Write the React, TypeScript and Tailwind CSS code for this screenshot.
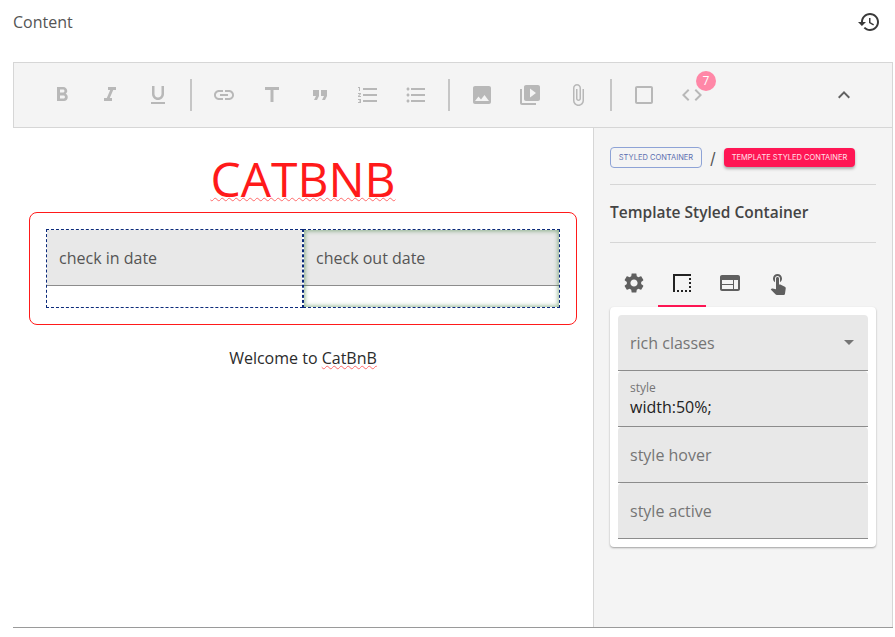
const P = {
  bold: 'M15.6 10.79c.97-.67 1.65-1.77 1.65-2.79 0-2.26-1.75-4-4-4H7v14h7.04c2.09 0 3.71-1.7 3.71-3.79 0-1.52-.86-2.82-2.15-3.42zM10 6.5h3c.83 0 1.5.67 1.5 1.5s-.67 1.5-1.5 1.5h-3v-3zm3.5 9H10v-3h3.5c.83 0 1.5.67 1.5 1.5s-.67 1.5-1.5 1.5z',
  italic: 'M10 4v3h2.21l-3.42 8H6v3h8v-3h-2.21l3.42-8H18V4z',
  underline: 'M12 17c3.31 0 6-2.69 6-6V3h-2.5v8c0 1.93-1.57 3.5-3.5 3.5S8.5 12.93 8.5 11V3H6v8c0 3.31 2.69 6 6 6zm-7 2v2h14v-2H5z',
  link: 'M3.9 12c0-1.71 1.39-3.1 3.1-3.1h4V7H7c-2.76 0-5 2.24-5 5s2.24 5 5 5h4v-1.9H7c-1.71 0-3.1-1.39-3.1-3.1zM8 13h8v-2H8v2zm9-6h-4v1.9h4c1.71 0 3.1 1.39 3.1 3.1s-1.39 3.1-3.1 3.1h-4V17h4c2.76 0 5-2.24 5-5s-2.24-5-5-5z',
  title: 'M5 4v3h5.5v12h3V7H19V4z',
  quote: 'M6 17h3l2-4V7H5v6h3zm8 0h3l2-4V7h-6v6h3z',
  numbered: 'M2 17h2v.5H3v1h1v.5H2v1h3v-4H2v1zm1-9h1V4H2v1h1v3zm-1 3h1.8L2 13.1v.9h3v-1H3.2L5 10.9V10H2v1zm5-6v2h14V5H7zm0 14h14v-2H7v2zm0-6h14v-2H7v2z',
  bulleted: 'M4 10.5c-.83 0-1.5.67-1.5 1.5s.67 1.5 1.5 1.5 1.5-.67 1.5-1.5-.67-1.5-1.5-1.5zm0-6c-.83 0-1.5.67-1.5 1.5S3.17 7.5 4 7.5 5.5 6.83 5.5 6 4.83 4.5 4 4.5zm0 12c-.83 0-1.5.68-1.5 1.5s.68 1.5 1.5 1.5 1.5-.68 1.5-1.5-.67-1.5-1.5-1.5zM7 19h14v-2H7v2zm0-6h14v-2H7v2zm0-8v2h14V5H7z',
  image: 'M21 19V5c0-1.1-.9-2-2-2H5c-1.1 0-2 .9-2 2v14c0 1.1.9 2 2 2h14c1.1 0 2-.9 2-2zM8.5 13.5l2.5 3.01L14.5 12l4.5 6H5l3.5-4.5z',
  video: 'M4 6H2v14c0 1.1.9 2 2 2h14v-2H4V6zm16-4H8c-1.1 0-2 .9-2 2v12c0 1.1.9 2 2 2h12c1.1 0 2-.9 2-2V4c0-1.1-.9-2-2-2zm-8 12.5v-9l6 4.5-6 4.5z',
  attach: 'M16.5 6v11.5c0 2.21-1.79 4-4 4s-4-1.79-4-4V5c0-1.38 1.12-2.5 2.5-2.5s2.5 1.12 2.5 2.5v10.5c0 .55-.45 1-1 1s-1-.45-1-1V6H10v9.5c0 1.38 1.12 2.5 2.5 2.5s2.5-1.12 2.5-2.5V5c0-2.21-1.79-4-4-4S7 2.79 7 5v12.5c0 3.04 2.46 5.5 5.5 5.5s5.5-2.46 5.5-5.5V6h-1.5z',
  square: 'M19 5v14H5V5h14m0-2H5c-1.1 0-2 .9-2 2v14c0 1.1.9 2 2 2h14c1.1 0 2-.9 2-2V5c0-1.1-.9-2-2-2z',
  code: 'M9.4 16.6L4.8 12l4.6-4.6L8 6l-6 6 6 6 1.4-1.4zm5.2 0l4.6-4.6-4.6-4.6L16 6l6 6-6 6-1.4-1.4z',
  expandLess: 'M12 8l-6 6 1.41 1.41L12 10.83l4.59 4.58L18 14z',
  history: 'M13 3c-4.97 0-9 4.03-9 9H1l3.89 3.89.07.14L9 12H6c0-3.87 3.13-7 7-7s7 3.13 7 7-3.13 7-7 7c-1.93 0-3.68-.79-4.94-2.06l-1.42 1.42C8.27 19.99 10.51 21 13 21c4.97 0 9-4.03 9-9s-4.03-9-9-9zm-1 5v5l4.28 2.54.72-1.21-3.5-2.08V8H12z',
  settings: 'M19.14 12.94c.04-.3.06-.61.06-.94 0-.32-.02-.64-.07-.94l2.03-1.58c.18-.14.23-.41.12-.61l-1.92-3.32c-.12-.22-.37-.29-.59-.22l-2.39.96c-.5-.38-1.03-.7-1.62-.94l-.36-2.54c-.04-.24-.24-.41-.48-.41h-3.84c-.24 0-.43.17-.47.41l-.36 2.54c-.59.24-1.13.57-1.62.94l-2.39-.96c-.22-.08-.47 0-.59.22L2.74 8.87c-.12.21-.08.47.12.61l2.03 1.58c-.05.3-.09.63-.09.94s.02.64.07.94l-2.03 1.58c-.18.14-.23.41-.12.61l1.92 3.32c.12.22.37.29.59.22l2.39-.96c.5.38 1.03.7 1.62.94l.36 2.54c.05.24.24.41.48.41h3.84c.24 0 .44-.17.47-.41l.36-2.54c.59-.24 1.13-.56 1.62-.94l2.39.96c.22.08.47 0 .59-.22l1.92-3.32c.12-.22.07-.47-.12-.61l-2.01-1.58zM12 15.6c-1.98 0-3.6-1.62-3.6-3.6s1.62-3.6 3.6-3.6 3.6 1.62 3.6 3.6-1.62 3.6-3.6 3.6z',
  border: 'M15 21h2v-2h-2v2zm4 0h2v-2h-2v2zM7 21h2v-2H7v2zm4 0h2v-2h-2v2zm8-4h2v-2h-2v2zm0-4h2v-2h-2v2zM3 3v18h2V5h16V3H3zm16 6h2V7h-2v2z',
  web: 'M20 4H4c-1.1 0-1.99.9-1.99 2L2 18c0 1.1.9 2 2 2h16c1.1 0 2-.9 2-2V6c0-1.1-.9-2-2-2zm-5 14H4v-4h11v4zm0-5H4V9h11v4zm5 5h-4V9h4v9z',
  touch: 'M9 11.24V7.5C9 6.12 10.12 5 11.5 5S14 6.12 14 7.5v3.74c1.21-.81 2-2.18 2-3.74C16 5.01 13.99 3 11.5 3S7 5.01 7 7.5c0 1.56.79 2.93 2 3.74zm9.84 4.63l-4.54-2.26c-.17-.07-.35-.11-.54-.11H13v-6c0-.83-.67-1.5-1.5-1.5S10 6.67 10 7.5v10.74l-3.43-.72c-.08-.01-.15-.03-.24-.03-.31 0-.59.13-.79.33l-.79.8 4.94 4.94c.27.27.65.44 1.06.44h6.79c.75 0 1.33-.55 1.44-1.28l.75-5.27c.01-.07.02-.14.02-.2 0-.62-.38-1.16-.91-1.38z',
};

function Icon({ d, className = 'fill-[#b8b8b8]' }: { d: string; className?: string }) {
  return (
    <svg viewBox="0 0 24 24" width="24" height="24" className={className}>
      <path d={d} />
    </svg>
  );
}

function ToolButton({ d }: { d: string }) {
  return (
    <div className="w-12 h-12 flex items-center justify-center">
      <Icon d={d} />
    </div>
  );
}

function Sep() {
  return (
    <div className="w-[18px] flex justify-center">
      <div className="w-0.5 h-8 bg-[#c6c6c6]" />
    </div>
  );
}

function Toolbar() {
  return (
    <div className="h-[66px] bg-[#f4f4f4] border border-[#d6d6d6] flex items-center pl-6 pr-[24px]">
      <ToolButton d={P.bold} />
      <ToolButton d={P.italic} />
      <ToolButton d={P.underline} />
      <Sep />
      <ToolButton d={P.link} />
      <ToolButton d={P.title} />
      <ToolButton d={P.quote} />
      <ToolButton d={P.numbered} />
      <ToolButton d={P.bulleted} />
      <Sep />
      <ToolButton d={P.image} />
      <ToolButton d={P.video} />
      <ToolButton d={P.attach} />
      <Sep />
      <ToolButton d={P.square} />
      <div className="relative w-12 h-12 flex items-center justify-center">
        <Icon d={P.code} />
        <span className="absolute left-[28px] top-0 w-5 h-5 rounded-full bg-[#ff87a7] text-white text-xs flex items-center justify-center">
          7
        </span>
      </div>
      <div className="ml-auto w-12 h-12 flex items-center justify-center">
        <Icon d={P.expandLess} className="fill-[#616161]" />
      </div>
    </div>
  );
}

function DateField({ label, active }: { label: string; active?: boolean }) {
  return (
    <div
      className={
        'relative flex-1 h-[79px] border border-dashed border-[#0b2a7a] ' +
        (active
          ? "after:absolute after:inset-0 after:content-[''] after:shadow-[inset_0_0_4px_1px_rgba(70,130,70,0.6)]"
          : '')
      }
    >
      <div className="h-14 bg-[#e8e8e8] border-b border-[#8c8c8c] flex items-center pl-3 text-base text-[#555555]">
        {label}
      </div>
    </div>
  );
}

function Editor() {
  return (
    <div className="flex-1 bg-white flex flex-col items-center">
      <h1 className="mt-[22px] h-[58px] text-[48px] leading-[58px] text-[#ff1a1a] underline decoration-wavy decoration-[#ff6a6a] decoration-1 underline-offset-0">
        CATBNB
      </h1>
      <div className="mt-[4px] w-[548px] h-[113px] border border-[#ff1a1a] rounded-lg p-4 flex">
        <DateField label="check in date" />
        <DateField label="check out date" active />
      </div>
      <p className="mt-[21px] text-base leading-[24px] text-[#2b2b2b]">
        Welcome to <span className="underline decoration-wavy decoration-[#ff6a6a] decoration-1">CatBnB</span>
      </p>
    </div>
  );
}

function Field({ label, value, select }: { label: string; value?: string; select?: boolean }) {
  return (
    <div className="h-14 bg-[#e8e8e8] rounded-t border-b border-[#8c8c8c] px-3 flex items-center justify-between">
      {value ? (
        <div>
          <div className="text-xs leading-4 text-[#757575]">{label}</div>
          <div className="text-base leading-[22px] text-[#222222]">{value}</div>
        </div>
      ) : (
        <span className="text-base text-[#757575]">{label}</span>
      )}
      {select && <div className="mr-[2px] w-0 h-0 border-x-[5px] border-x-transparent border-t-[5px] border-t-[#757575]" />}
    </div>
  );
}

function Sidebar() {
  return (
    <aside className="w-[300px] bg-[#f4f4f4] border-l border-r border-[#d6d6d6] px-4 flex flex-col">
      <div className="h-[57px] pt-[3px] flex items-center border-b border-[#d6d6d6] font-['Inter',sans-serif] text-[7.5px]">
        <span className="h-[21px] w-[92px] flex items-center justify-center rounded border border-[#8ea3d6] text-[#5c6fb0] uppercase">
          Styled Container
        </span>
        <span className="w-[22px] text-center text-base text-[#555555]">/</span>
        <span className="h-[19px] w-[131px] flex items-center justify-center rounded bg-[#ff1654] text-[#ffe3ea] uppercase shadow-[0_2px_3px_rgba(0,0,0,0.3)]">
          Template Styled Container
        </span>
      </div>
      <div className="h-[58px] pb-[1px] flex items-center border-b border-[#d6d6d6] text-[15.5px] font-semibold text-[#444444]">
        Template Styled Container
      </div>
      <div className="mt-[16px] flex h-12">
        {[P.settings, P.border, P.web, P.touch].map((d, i) => (
          <div
            key={i}
            className={
              'w-12 pt-[2px] flex items-center justify-center border-b-2 ' +
              (i === 1 ? 'border-[#ff1654]' : 'border-transparent')
            }
          >
            <Icon d={d} className={i === 1 ? 'fill-[#222222]' : 'fill-[#5f5f5f]'} />
          </div>
        ))}
      </div>
      <div className="bg-white rounded p-2 shadow-[0_1px_2px_rgba(0,0,0,0.35)]">
        <Field label="rich classes" select />
        <Field label="style" value="width:50%;" />
        <Field label="style hover" />
        <Field label="style active" />
      </div>
    </aside>
  );
}

export default function App() {
  return (
    <div className="w-[895px] h-[637px] bg-white font-['Open_Sans',sans-serif] overflow-hidden">
      <div className="h-[62px] pl-[13px] pr-[14px] pb-[18px] flex justify-between items-center">
        <span className="text-base text-[#555555]">Content</span>
        <Icon d={P.history} className="fill-[#3a3a3a]" />
      </div>
      <div className="ml-[13px] w-[880px]">
        <Toolbar />
        <div className="flex h-[500px] border-b border-[#9a9a9a]">
          <Editor />
          <Sidebar />
        </div>
      </div>
    </div>
  );
}
